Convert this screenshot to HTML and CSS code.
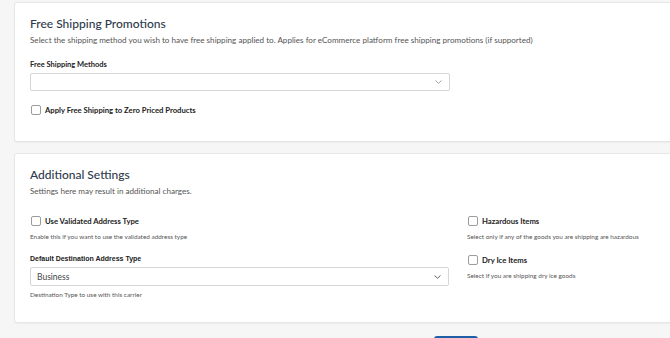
FILE: index.html
```html
<!DOCTYPE html>
<html>
<head>
<meta charset="utf-8">
<link rel="stylesheet" href="styles.css">
</head>
<body>
<div class="page">
  <section class="card card-first">
    <h2 class="title">Free Shipping Promotions</h2>
    <p class="subtitle">Select the shipping method you wish to have free shipping applied to. Applies for eCommerce platform free shipping promotions (if supported)</p>
    <div class="narrow">
      <div class="label label-first">Free Shipping Methods</div>
      <div class="select select-empty"><span class="value"></span><svg class="chev" width="7" height="4" viewBox="0 0 7 4"><path d="M0.5 0.5 L3.5 3.3 L6.5 0.5" fill="none" stroke="#9a9a9a" stroke-width="0.9"/></svg></div>
      <label class="check check-first"><span class="box"></span><span class="check-text">Apply Free Shipping to Zero Priced Products</span></label>
    </div>
  </section>

  <section class="card card-second">
    <h2 class="title">Additional Settings</h2>
    <p class="subtitle">Settings here may result in additional charges.</p>
    <div class="grid">
      <div class="col">
        <label class="check"><span class="box"></span><span class="check-text">Use Validated Address Type</span></label>
        <p class="help">Enable this if you want to use the validated address type</p>
        <div class="label label-mid">Default Destination Address Type</div>
        <div class="select select-tall"><span class="value">Business</span><svg class="chev" width="7" height="4" viewBox="0 0 7 4"><path d="M0.5 0.5 L3.5 3.3 L6.5 0.5" fill="none" stroke="#555" stroke-width="0.9"/></svg></div>
        <p class="help help-after">Destination Type to use with this carrier</p>
      </div>
      <div class="col">
        <label class="check"><span class="box"></span><span class="check-text">Hazardous Items</span></label>
        <p class="help">Select only if any of the goods you are shipping are hazardous</p>
        <label class="check check-mid"><span class="box"></span><span class="check-text">Dry Ice Items</span></label>
        <p class="help">Select if you are shipping dry ice goods</p>
      </div>
    </div>
  </section>

  <div class="footer">
    <button class="btn" aria-label="Save"></button>
  </div>
</div>
</body>
</html>
```

FILE: styles.css
```css
* { box-sizing: border-box; }
html, body { margin: 0; padding: 0; }
body {
  background: #f6f6f6;
  font-family: "Lato", "Liberation Sans", sans-serif;
  overflow: hidden;
  height: 338px;
}
.page {
  padding: 2px 0 0 14px;
}
.card {
  background: #fff;
  border: 1px solid #e6e6e6;
  border-radius: 3px;
  margin-right: -12px;
  padding: 13px 0 0 15px;
  box-shadow: 0 1px 1px rgba(0,0,0,0.04);
}
.card-first { padding-bottom: 26px; }
.card-second { margin-top: 11px; padding-bottom: 23px; }
.title {
  margin: 0;
  font-size: 12px;
  line-height: 16px;
  font-weight: 500;
  color: #2d3a4c;
}
.subtitle {
  margin: 3px 0 0;
  font-size: 8.1px;
  line-height: 10px;
  color: #555;
}
.narrow { width: 420px; }
.label {
  font-size: 7.5px;
  line-height: 10px;
  font-weight: 700;
  color: #222;
}
.label-first { margin-top: 15px; }
.label-mid {
  margin-top: 13px;
  font-family: "Liberation Sans", "Lato", sans-serif;
  font-size: 7px;
}
.select {
  margin-top: 3px;
  height: 18px;
  border: 1px solid #d6d6d6;
  border-radius: 2px;
  display: flex;
  align-items: center;
  justify-content: space-between;
  padding: 0 7px 0 6px;
  background: #fff;
}
.select-tall { height: 19px; }
.value {
  font-size: 8.5px;
  color: #444;
}
.chev { display: block; }
.check {
  display: flex;
  align-items: center;
  height: 10px;
  gap: 4px;
  padding-left: 1px;
}
.check-first { margin-top: 14px; }
.check-mid { margin-top: 14px; }
.box {
  width: 10px;
  height: 10px;
  border: 1px solid #9c9c9c;
  border-radius: 2px;
  background: #fff;
  flex: none;
}
.check-text {
  font-size: 7.7px;
  font-weight: 700;
  color: #222;
}
.grid {
  margin-top: 20px;
  display: grid;
  grid-template-columns: 419px 1fr;
  column-gap: 18px;
}
.help {
  margin: 7px 0 0;
  font-size: 6.4px;
  line-height: 8px;
  color: #555;
}
.help-after { margin-top: 5px; }
.footer {
  display: flex;
  padding: 13px 0 0 420px;
}
.btn {
  width: 44px;
  height: 20px;
  border: 1px solid #1f5fa6;
  border-top-width: 2px;
  border-radius: 3px;
  background: #fff;
  padding: 0;
}
```
